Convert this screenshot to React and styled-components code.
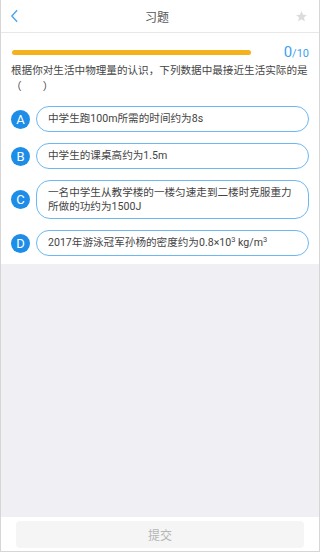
import React from 'react'
import styled, { createGlobalStyle } from 'styled-components'

const GlobalStyle = createGlobalStyle`
  html, body { margin: 0; padding: 0; }
  body {
    font-family: Roboto, "Noto Sans CJK SC", sans-serif;
    background: #fff;
  }
  * { box-sizing: border-box; }
`

const options = [
  { key: 'A', text: '中学生跑100m所需的时间约为8s' },
  { key: 'B', text: '中学生的课桌高约为1.5m' },
  { key: 'C', text: '一名中学生从教学楼的一楼匀速走到二楼时克服重力所做的功约为1500J' },
  {
    key: 'D',
    text: (
      <>
        2017年游泳冠军孙杨的密度约为0.8×10<sup>3</sup> kg/m<sup>3</sup>
      </>
    ),
  },
]

const App = () => {
  return (
    <>
      <GlobalStyle />
      <Screen>
        <Header>
          <Back viewBox="0 0 10 16">
            <path d="M8 1.5 L2 8 L8 14.5" fill="none" stroke="#4aa6f2" strokeWidth="1.6" />
          </Back>
          <Title>习题</Title>
          <Star viewBox="0 0 24 24">
            <path
              d="M12 2 L14.9 8.6 L22 9.3 L16.6 14 L18.2 21 L12 17.3 L5.8 21 L7.4 14 L2 9.3 L9.1 8.6 Z"
              fill="#dcdcdc"
            />
          </Star>
        </Header>

        <Body>
          <ProgressRow>
            <Track />
            <Count>
              <Current>0</Current>/10
            </Count>
          </ProgressRow>

          <Question>
            根据你对生活中物理量的认识，下列数据中最接近生活实际的是
            <br />（　　）
          </Question>

          <Options>
            {options.map((o) => (
              <Option key={o.key}>
                <Letter>{o.key}</Letter>
                <Pill>{o.text}</Pill>
              </Option>
            ))}
          </Options>
        </Body>

        <Filler />

        <Footer>
          <Submit>提交</Submit>
        </Footer>
      </Screen>
    </>
  )
}

export default App

const Screen = styled.div`
display: flex;
flex-direction: column;
width: 320px;
height: 552px;
border: 1px solid #d6d6d6;
border-top: none;
overflow: hidden;
`
const Header = styled.div`
display: flex;
align-items: center;
justify-content: space-between;
height: 33px;
padding: 0 11px 0 9px;
border-bottom: 1px solid #e8e8e8;
background: #fff;
`
const Back = styled.svg`
width: 9px;
height: 14px;
`
const Title = styled.div`
font-size: 12px;
color: #555;
`
const Star = styled.svg`
width: 13px;
height: 13px;
`
const Body = styled.div`
background: #fff;
padding: 12px 10px 8px 10px;
`
const ProgressRow = styled.div`
display: flex;
align-items: center;
justify-content: space-between;
height: 14px;
`
const Track = styled.div`
width: 239px;
height: 5px;
margin-left: 1px;
border-radius: 3px;
background: #f6b21e;
`
const Count = styled.div`
font-size: 11px;
color: #3d9ff0;
`
const Current = styled.span`
font-size: 15px;
`
const Question = styled.div`
margin-top: 4px;
font-size: 10.6px;
line-height: 16px;
color: #444;
white-space: nowrap;
`
const Options = styled.div`
display: flex;
flex-direction: column;
gap: 11px;
margin-top: 11px;
`
const Option = styled.div`
display: flex;
align-items: center;
gap: 6px;
`
const Letter = styled.div`
flex: none;
display: flex;
align-items: center;
justify-content: center;
width: 19px;
height: 19px;
border-radius: 50%;
background: #1d8de8;
color: #fff;
font-size: 13px;
`
const Pill = styled.div`
flex: 1;
min-height: 26px;
padding: 5px 11px 4px;
border: 1px solid #6cb8f2;
border-radius: 14px;
font-size: 10.6px;
line-height: 14px;
color: #444;

sup {
  font-size: 7.5px;
  line-height: 0;
  vertical-align: 4px;
}
`
const Filler = styled.div`
flex: 1;
background: #efeff4;
`
const Footer = styled.div`
height: 34px;
padding: 4px 15px 3px 15px;
background: #fff;
`
const Submit = styled.div`
display: flex;
align-items: center;
justify-content: center;
height: 100%;
border-radius: 4px;
background: #f5f5f5;
color: #b5b5b5;
font-size: 12px;
`
